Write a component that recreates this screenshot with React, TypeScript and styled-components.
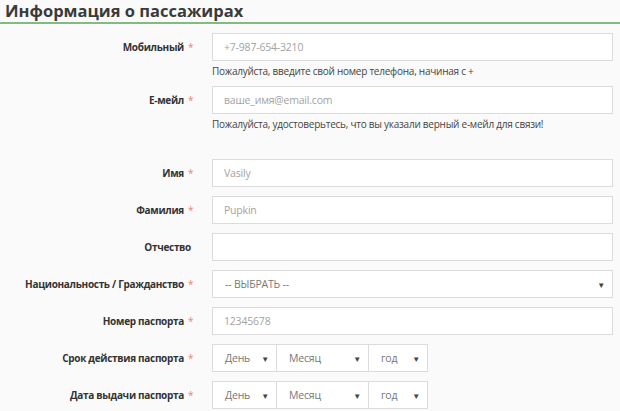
import React from "react";
import styled, { createGlobalStyle } from "styled-components";

const Global = createGlobalStyle`
  html, body { margin: 0; padding: 0; background: #fafafa; }
  body { font-family: "Open Sans", "Noto Sans", sans-serif; color: #333; }
`;

const Page = styled.div`
  width: 620px;
  height: 411px;
  overflow: hidden;
  background: #fafafa;
`;

const Title = styled.h2`
  margin: 0;
  padding: 0 0 0 5px;
  font-size: 16.5px;
  line-height: 22px;
  font-weight: 700;
  color: #3a3a3a;
  border-bottom: 2px solid #82bb82;
`;

const Form = styled.div`
  display: grid;
  grid-template-columns: 194px 401px;
  column-gap: 18px;
  padding-top: 9px;
`;

const Label = styled.div`
  display: flex;
  align-items: center;
  justify-content: flex-end;
  height: 28px;
  font-size: 10px;
  letter-spacing: -0.3px;
  font-weight: 700;
  color: #333;
  white-space: nowrap;
`;

const Star = styled.span`
  color: #e8817f;
  font-weight: 400;
  margin-left: 4px;
  width: 6px;
`;

const NoStar = styled.span`
  width: 3px;
`;

const Field = styled.div<{ $mb?: number }>`
  grid-column: 2;
  margin-bottom: ${(p) => (p.$mb ?? 9)}px;
`;

const LabelCell = styled.div<{ $mb?: number }>`
  grid-column: 1;
  margin-bottom: ${(p) => (p.$mb ?? 9)}px;
`;

const Input = styled.div`
  box-sizing: border-box;
  height: 28px;
  border: 1px solid #dcdcdc;
  background: #fff;
  display: flex;
  align-items: center;
  padding: 0 11px;
  font-size: 10.5px;
  letter-spacing: -0.2px;
  color: #a3a3a3;
`;

const Help = styled.div`
  font-size: 10px;
  letter-spacing: -0.25px;
  line-height: 14px;
  margin-top: 3px;
  color: #444;
`;

const Select = styled(Input)<{ $w?: number }>`
  justify-content: space-between;
  padding: 0 7px 0 12px;
  color: #777;
  ${(p) => (p.$w ? `width: ${p.$w}px; flex: none;` : "")}
  & + & { margin-left: -1px; }
`;

const Arrow = styled.span`
  font-size: 8px;
  color: #444;
`;

const DateRow = styled.div`
  display: flex;
`;

function Lbl({ text, req = true, mb }: { text: string; req?: boolean; mb?: number }) {
  return (
    <LabelCell $mb={mb}>
      <Label>
        {text}
        {req ? <Star>*</Star> : <NoStar />}
      </Label>
    </LabelCell>
  );
}

function DateSelects() {
  return (
    <DateRow>
      <Select $w={65}>
        День<Arrow>▼</Arrow>
      </Select>
      <Select $w={93}>
        Месяц<Arrow>▼</Arrow>
      </Select>
      <Select $w={60}>
        год<Arrow>▼</Arrow>
      </Select>
    </DateRow>
  );
}

export default function App() {
  return (
    <Page>
      <Global />
      <Title>Информация о пассажирах</Title>
      <Form>
        <Lbl text="Мобильный" mb={8} />
        <Field $mb={8}>
          <Input>+7-987-654-3210</Input>
          <Help>Пожалуйста, введите свой номер телефона, начиная с +</Help>
        </Field>
        <Lbl text="Е-мейл" mb={28} />
        <Field $mb={28}>
          <Input>ваше_имя@email.com</Input>
          <Help>Пожалуйста, удостоверьтесь, что вы указали верный е-мейл для связи!</Help>
        </Field>
        <Lbl text="Имя" />
        <Field>
          <Input>Vasily</Input>
        </Field>
        <Lbl text="Фамилия" />
        <Field>
          <Input>Pupkin</Input>
        </Field>
        <Lbl text="Отчество" req={false} />
        <Field>
          <Input />
        </Field>
        <Lbl text="Национальность / Гражданство" />
        <Field>
          <Select>
            -- ВЫБРАТЬ --<Arrow>▼</Arrow>
          </Select>
        </Field>
        <Lbl text="Номер паспорта" />
        <Field>
          <Input>12345678</Input>
        </Field>
        <Lbl text="Срок действия паспорта" />
        <Field>
          <DateSelects />
        </Field>
        <Lbl text="Дата выдачи паспорта" />
        <Field>
          <DateSelects />
        </Field>
      </Form>
    </Page>
  );
}
